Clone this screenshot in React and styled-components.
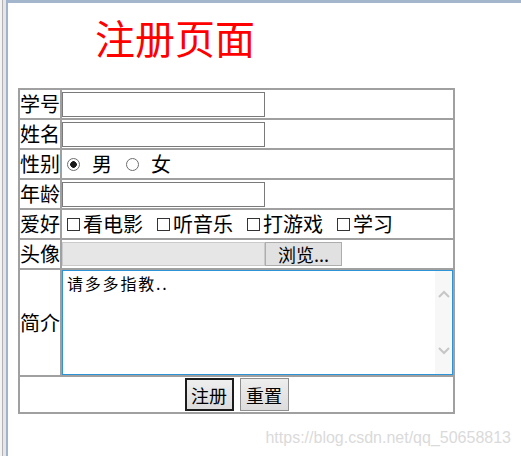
import React from "react";
import styled, { createGlobalStyle } from "styled-components";

const GlobalStyle = createGlobalStyle`
  body {
    margin: 0;
    background: #fff;
    font-family: "Noto Sans CJK SC", "Noto Sans", sans-serif;
    color: #000;
  }
`;

function App() {
  return (
    <Screen>
      <GlobalStyle />
      <SideRail />
      <Page>
        <Title>注册页面</Title>
        <FormTable>
          <tbody>
            <tr>
              <LabelCell>学号</LabelCell>
              <Cell>
                <TextInput type="text" />
              </Cell>
            </tr>
            <tr>
              <LabelCell>姓名</LabelCell>
              <Cell>
                <TextInput type="text" />
              </Cell>
            </tr>
            <tr>
              <LabelCell>性别</LabelCell>
              <Cell>
                <ChoiceRow>
                  <Radio type="radio" name="sex" defaultChecked />
                  <RadioText>男</RadioText>
                  <Radio type="radio" name="sex" />
                  <RadioText>女</RadioText>
                </ChoiceRow>
              </Cell>
            </tr>
            <tr>
              <LabelCell>年龄</LabelCell>
              <Cell>
                <TextInput type="text" />
              </Cell>
            </tr>
            <tr>
              <LabelCell>爱好</LabelCell>
              <Cell>
                <ChoiceRow>
                  {["看电影", "听音乐", "打游戏", "学习"].map((h) => (
                    <Hobby key={h}>
                      <Check type="checkbox" />
                      {h}
                    </Hobby>
                  ))}
                </ChoiceRow>
              </Cell>
            </tr>
            <tr>
              <LabelCell>头像</LabelCell>
              <Cell>
                <FilePicker>
                  <FileField />
                  <BrowseButton type="button">浏览...</BrowseButton>
                </FilePicker>
              </Cell>
            </tr>
            <tr>
              <LabelCell>简介</LabelCell>
              <Cell $tall>
                <TextBox>
                  <Intro defaultValue="请多多指教.." />
                  <ScrollTrack>
                    <svg width="12" height="8" viewBox="0 0 12 8">
                      <path d="M1 7 L6 2 L11 7" fill="none" stroke="#c6c6c6" strokeWidth="2" />
                    </svg>
                    <svg width="12" height="8" viewBox="0 0 12 8">
                      <path d="M1 1 L6 6 L11 1" fill="none" stroke="#c6c6c6" strokeWidth="2" />
                    </svg>
                  </ScrollTrack>
                </TextBox>
              </Cell>
            </tr>
            <tr>
              <Cell colSpan={2} $buttons>
                <ButtonRow>
                  <FormButton type="submit" $primary>注册</FormButton>
                  <FormButton type="reset">重置</FormButton>
                </ButtonRow>
              </Cell>
            </tr>
          </tbody>
        </FormTable>
      </Page>
      <Watermark>https://blog.csdn.net/qq_50658813</Watermark>
    </Screen>
  );
}

export default App;

const Screen = styled.div`
  position: relative;
  display: flex;
  min-height: 456px;
`;
const SideRail = styled.div`
  width: 8px;
  flex-shrink: 0;
  background: linear-gradient(
    to right,
    #f3f3f3 0 2px,
    #b2b2b2 2px 3px,
    #e6e6e6 3px 6px,
    #9fb3cc 6px 8px
  );
`;
const Page = styled.div`
  flex: 1;
  border-top: 3px solid #a4b6cc;
  padding-left: 10px;
`;
const Title = styled.h1`
  margin: 14px 0 30px 77px;
  height: 41px;
  font-size: 40px;
  line-height: 41px;
  font-weight: normal;
  color: #ff0000;
`;
const FormTable = styled.table`
  border-collapse: separate;
  border-spacing: 0;
  border: 1px solid #a0a0a0;
  width: 437px;
`;
const Cell = styled.td`
  border: 1px solid #a0a0a0;
  padding: 0;
  height: ${(p) => (p.$tall ? "105px" : p.$buttons ? "35px" : "28px")};
  vertical-align: middle;
  font-size: 20px;
  line-height: 26px;
`;
const LabelCell = styled(Cell)`
  width: 40px;
  white-space: nowrap;
`;
const TextInput = styled.input`
  display: block;
  box-sizing: border-box;
  width: 203px;
  height: 25px;
  margin: 0;
  border: 1px solid #7a7a7a;
  padding: 0 2px;
  font-size: 16px;
  background: #fff;
`;
const ChoiceRow = styled.div`
  display: flex;
  align-items: center;
`;
const Radio = styled.input`
  appearance: none;
  box-sizing: border-box;
  width: 13px;
  height: 13px;
  margin: 0 12px 0 5px;
  border: 1px solid #6e6e6e;
  border-radius: 50%;
  background: #fff;
  &:checked {
    background: radial-gradient(circle, #1a1a1a 0 3px, #fff 3.6px);
  }
`;
const RadioText = styled.span`
  margin-right: 9px;
`;
const Hobby = styled.label`
  display: flex;
  align-items: center;
  margin-right: 9px;
`;
const Check = styled.input`
  appearance: none;
  box-sizing: border-box;
  width: 13px;
  height: 13px;
  margin: 0 3px 0 5px;
  border: 1px solid #333;
  background: #fff;
`;
const FilePicker = styled.div`
  display: flex;
  align-items: center;
`;
const FileField = styled.span`
  box-sizing: border-box;
  width: 203px;
  height: 24px;
  background: #e6e6e6;
  border: 1px solid #cacaca;
`;
const BrowseButton = styled.button`
  box-sizing: border-box;
  width: 77px;
  height: 24px;
  margin: 0;
  padding: 0;
  border: 1px solid #adadad;
  background: #e1e1e1;
  font-family: "Noto Sans CJK SC", sans-serif;
  font-size: 18px;
  line-height: 20px;
  color: #000;
`;
const TextBox = styled.div`
  display: flex;
  box-sizing: border-box;
  width: 391px;
  height: 105px;
  border: 1px solid #2d94d8;
  background: #fff;
`;
const Intro = styled.textarea`
  flex: 1;
  border: none;
  outline: none;
  resize: none;
  margin: 0;
  padding: 2px 4px;
  font-family: "Noto Sans CJK SC", sans-serif;
  font-size: 16px;
  letter-spacing: 1.8px;
  line-height: 20px;
  color: #000;
  overflow: hidden;
`;
const ScrollTrack = styled.div`
  width: 17px;
  display: flex;
  flex-direction: column;
  align-items: center;
  justify-content: space-between;
  padding: 19px 0 19px;
  background: #f7f7f7;
`;
const ButtonRow = styled.div`
  display: flex;
  justify-content: center;
  gap: 6px;
`;
const FormButton = styled.button`
  box-sizing: border-box;
  width: 49px;
  height: 33px;
  margin: 0;
  padding: 0;
  border: ${(p) => (p.$primary ? "2px solid #1c1c1c" : "1px solid #8f8f8f")};
  background: linear-gradient(#eeeeee, #dcdcdc);
  font-family: "Noto Sans CJK SC", sans-serif;
  font-size: 18px;
  color: #000;
`;
const Watermark = styled.div`
  position: absolute;
  right: 10px;
  bottom: 8px;
  font-family: "Liberation Sans", Arial, sans-serif;
  font-size: 16px;
  line-height: 20px;
  color: #dadada;
`;
